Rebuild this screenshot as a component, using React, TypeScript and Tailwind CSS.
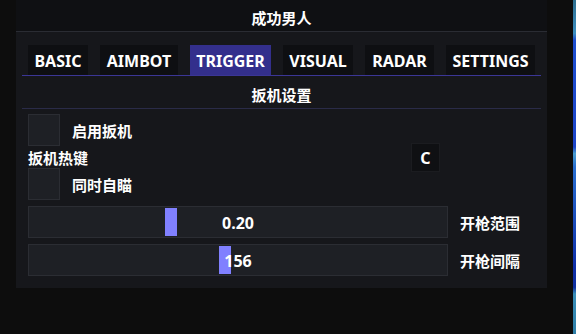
import React from 'react';

const tabs = [
  { label: 'BASIC', width: 'w-[60px]' },
  { label: 'AIMBOT', width: 'w-[78px]' },
  { label: 'TRIGGER', width: 'w-[81px]' },
  { label: 'VISUAL', width: 'w-[70px]' },
  { label: 'RADAR', width: 'w-[69px]' },
  { label: 'SETTINGS', width: 'w-[89px]' },
];

const activeTab = 'TRIGGER';

function Checkbox({ label }: { label: string }) {
  return (
    <div className="flex h-[32px] items-center">
      <div className="h-[32px] w-[32px] border border-[#2b2d33] bg-[#1e2025]" />
      <span className="ml-[12px] pt-[2px] text-[15px] leading-none">{label}</span>
    </div>
  );
}

function Slider({ value, grabLeft, label }: { value: string; grabLeft: number; label: string }) {
  return (
    <div className="flex h-[32px] items-center">
      <div className="relative flex h-[32px] w-[420px] items-center justify-center border border-[#2b2d33] bg-[#1e2025] pt-[2px]">
        <div
          className="absolute top-[1px] h-[28px] w-[12px] bg-[#8080ff]"
          style={{ left: grabLeft }}
        />
        <span className="relative text-[16px] leading-none">{value}</span>
      </div>
      <span className="ml-[12px] pt-[2px] text-[15px] leading-none">{label}</span>
    </div>
  );
}

export default function App() {
  return (
    <div
      className="flex h-[334px] w-[576px] bg-[#0d0d0d] font-bold text-white"
      style={{ fontFamily: '"Noto Sans", "Noto Sans CJK SC", sans-serif' }}
    >
      <div className="ml-[16px] flex h-[288px] w-[531px] flex-col bg-[#16171b]">
        <div className="flex h-[32px] shrink-0 items-center justify-center border-b border-[#2a2c33] bg-[#0f1013] pt-[6px] text-[15px] leading-none">
          成功男人
        </div>

        <div className="flex flex-col px-[6px]">
          <div className="mt-[13px] flex gap-[12px] pl-[6px]">
            {tabs.map((tab) => (
              <div
                key={tab.label}
                className={`flex h-[30px] items-center justify-center pt-[2px] text-[16px] leading-none ${tab.width} ${
                  tab.label === activeTab ? 'bg-[#332f8c]' : 'bg-[#0e0f12]'
                }`}
              >
                {tab.label}
              </div>
            ))}
          </div>
          <div className="h-[1px] bg-[#3b3696]" />

          <div className="flex h-[32px] items-center justify-center pt-[6px] text-[15px] leading-none">
            扳机设置
          </div>
          <div className="h-[1px] bg-[#2a2b48]" />

          <div className="mt-[5px] flex flex-col px-[6px]">
            <Checkbox label="启用扳机" />
            <div className="flex h-[22px] items-center">
              <span className="w-[383px] pt-[2px] text-[15px] leading-none">扳机热键</span>
              <div className="flex h-[29px] w-[29px] items-center justify-center border border-[#1b1c20] bg-[#0f1013] pt-[2px] text-[16px] leading-none">
                C
              </div>
            </div>
            <Checkbox label="同时自瞄" />

            <div className="mt-[6px] flex flex-col gap-[6px]">
              <Slider value="0.20" grabLeft={136} label="开枪范围" />
              <Slider value="156" grabLeft={190} label="开枪间隔" />
            </div>
          </div>
        </div>
      </div>

      <div className="flex-1" />
      <div className="h-[334px] w-[3px] bg-[linear-gradient(to_bottom,#2f6f8f_0%,#3d8fc0_10%,#1f4fd0_12%,#1d45c8_44%,#4a9fd0_46%,#2a6fd0_50%,#0f2fa8_80%,#1030a0_86%,#3a8fb8_88%,#2f7fa8_100%)]" />
    </div>
  );
}
